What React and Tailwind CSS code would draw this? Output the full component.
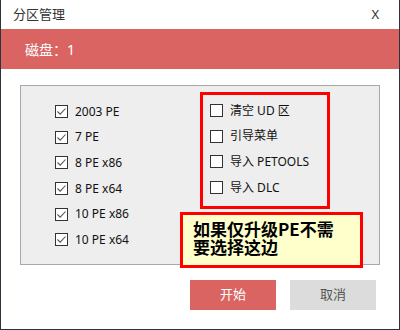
import React from 'react'

const LEFT = ['2003 PE', '7 PE', '8 PE x86', '8 PE x64', '10 PE x86', '10 PE x64']
const RIGHT = ['清空 UD 区', '引导菜单', '导入 PETOOLS', '导入 DLC']

function Box({ checked }) {
  return (
    <span className="w-[13px] h-[13px] shrink-0 border border-[#333] bg-white flex items-center justify-center">
      {checked && (
        <svg width="11" height="11" viewBox="0 0 11 11">
          <path d="M1.5 5.5 L4.2 8.2 L9.5 2.5" fill="none" stroke="#555" strokeWidth="1.1" />
        </svg>
      )}
    </span>
  )
}

function Row({ label, checked }) {
  return (
    <div className="h-[25.6px] flex items-center gap-[7px] text-[12px] text-[#111]">
      <Box checked={checked} />
      <span>{label}</span>
    </div>
  )
}

export default function App() {
  return (
    <div className="relative w-[400px] h-[330px] bg-white border-x border-b border-[#2e3340] font-['Noto_Sans','Noto_Sans_CJK_SC',sans-serif] overflow-hidden">

      {/* title */}
      <div className="h-[29px] flex items-center justify-between pl-[12px] pr-[20px] text-[#333]">
        <span className="text-[13px]">分区管理</span>
        <span className="text-[13px]">X</span>
      </div>

      {/* disk band */}
      <div className="h-[40px] bg-[#d96462] flex items-center pl-[24px] text-white text-[14px]">
        磁盘：1
      </div>

      {/* group box */}
      <div className="ml-[19px] mt-[16px] w-[360px] h-[180px] bg-[#eeeeee] border border-[#a8a8a8] flex pl-[34px] pt-[6px]">
        <div className="w-[145px] pt-[7px]">
          {LEFT.map(l => <Row key={l} label={l} checked />)}
        </div>
        <div className="w-[130px] h-[117px] border-[3px] border-[#ff0000] pl-[7px] pt-[3px]">
          {RIGHT.map(l => <Row key={l} label={l} />)}
        </div>
      </div>

      {/* buttons */}
      <div className="flex justify-end gap-[14px] pr-[23px] mt-[15px]">
        <button className="w-[86px] h-[30px] bg-[#d96462] text-white text-[13px]">开始</button>
        <button className="w-[86px] h-[30px] bg-[#dcdcdc] text-[#555] text-[13px]">取消</button>
      </div>

      {/* annotation */}
      <div className="absolute left-[179px] top-[212px] w-[183px] h-[56px] border-[3px] border-[#ff0000] bg-[#ffffcc] pl-[10px] pt-[5px] text-[17px] leading-[18px] font-bold text-black font-['Noto_Sans_CJK_SC',sans-serif]">
        如果仅升级PE不需<br />要选择这边
      </div>
    </div>
  )
}
